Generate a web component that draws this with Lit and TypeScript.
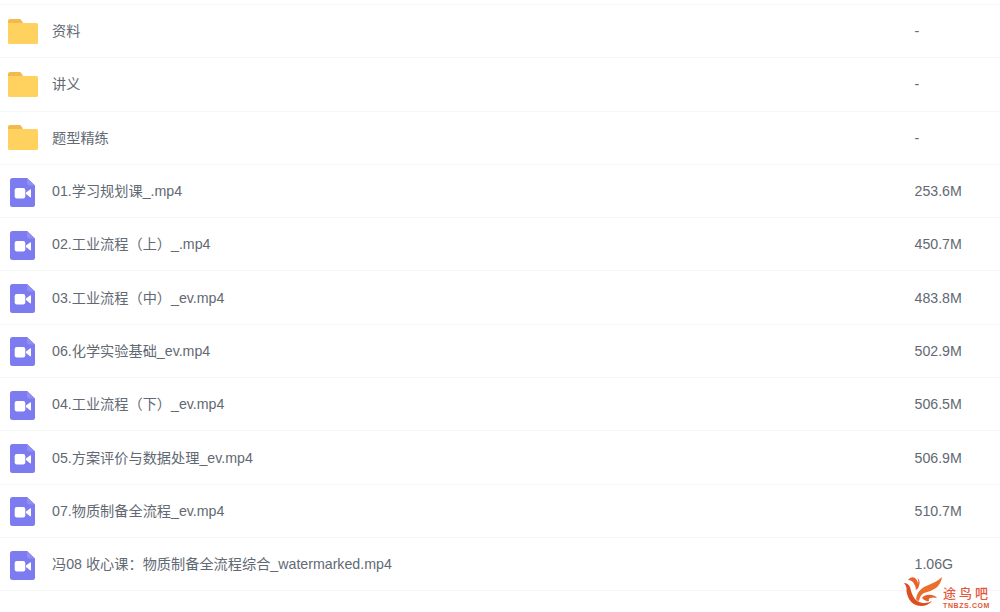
import { LitElement, html, css, svg } from "lit";
import { customElement } from "lit/decorators.js";

const rows: [string, string, string][] = [
  ["f", "资料", "-"],
  ["f", "讲义", "-"],
  ["f", "题型精练", "-"],
  ["v", "01.学习规划课_.mp4", "253.6M"],
  ["v", "02.工业流程（上）_.mp4", "450.7M"],
  ["v", "03.工业流程（中）_ev.mp4", "483.8M"],
  ["v", "06.化学实验基础_ev.mp4", "502.9M"],
  ["v", "04.工业流程（下）_ev.mp4", "506.5M"],
  ["v", "05.方案评价与数据处理_ev.mp4", "506.9M"],
  ["v", "07.物质制备全流程_ev.mp4", "510.7M"],
  ["v", "冯08 收心课：物质制备全流程综合_watermarked.mp4", "1.06G"],
];

const folder = svg`<svg class="fo" width="30" height="25" viewBox="0 0 30 25">
  <path d="M0 2Q0 0 2 0H11.5Q12.8 0 13.4 1.2L15 4H0Z" fill="#f2b94f"/>
  <path d="M0 4H28.5Q30 4 30 5.5V23.5Q30 25 28.5 25H1.5Q0 25 0 23.5Z" fill="#ffd25f"/>
</svg>`;

const video = svg`<svg class="vi" width="25" height="29" viewBox="0 0 25 29">
  <path d="M2.5 0H17L25 7.5V26.5Q25 29 22.5 29H2.5Q0 29 0 26.5V2.5Q0 0 2.5 0Z" fill="#7c7cf0"/>
  <path d="M17 0L25 7.5H19.5Q17 7.5 17 5Z" fill="#8f8ff4"/>
  <rect x="4.7" y="10" width="10.6" height="10.5" rx="2.2" fill="#fff"/>
  <path d="M16 14.6L20.4 11.2Q21 11 21 11.8V18.8Q21 19.6 20.4 19.4L16 16Z" fill="#fff"/>
</svg>`;

@customElement("app-root")
export class AppRoot extends LitElement {
  static styles = css`
    :host {
      display: block;
      position: relative;
      width: 1000px;
      height: 612px;
      overflow: hidden;
      background: #fff;
      font-family: "Liberation Sans", "Noto Sans CJK SC", sans-serif;
      color: #626973;
      font-size: 14.2px;
    }
    .list {
      display: flex;
      flex-direction: column;
      padding-top: 4px;
    }
    .row {
      display: flex;
      align-items: center;
      height: 53.3px;
      box-sizing: border-box;
      border-top: 1px solid #f5f6f8;
    }
    .row:last-child {
      border-bottom: 1px solid #f5f6f8;
    }
    .icon {
      width: 52px;
      display: flex;
    }
    .fo {
      margin-left: 8px;
    }
    .vi {
      margin-left: 10px;
      margin-top: 2px;
    }
    .name {
      flex: 1;
      padding-bottom: 2px;
    }
    .size {
      width: 85.5px;
    }
    .mark {
      position: absolute;
      left: 903px;
      top: 576px;
      width: 97px;
      height: 36px;
    }
    .logo {
      display: block;
    }
    .cn {
      position: absolute;
      left: 40px;
      top: 8.5px;
      font-size: 13px;
      line-height: 15px;
      letter-spacing: 3px;
      font-weight: 500;
      color: #e2573a;
      font-family: "Noto Sans CJK SC", sans-serif;
      white-space: nowrap;
    }
    .en {
      position: absolute;
      left: 40px;
      top: 25.5px;
      font-size: 7px;
      line-height: 8px;
      font-weight: 700;
      letter-spacing: 0.6px;
      color: #e2573a;
      font-family: "Liberation Sans", sans-serif;
      white-space: nowrap;
    }
  `;

  render() {
    return html`
      <div class="list">
        ${rows.map(
          ([t, n, s]) => html`<div class="row">
            <div class="icon">${t === "f" ? folder : video}</div>
            <div class="name">${n}</div>
            <div class="size">${s}</div>
          </div>`
        )}
        <div class="row"></div>
      </div>
      <div class="mark">
        <svg class="logo" width="40" height="32" viewBox="0 0 40 32">
          <path d="M7 2Q11 0 13 3Q15 5 15 9Q16 5 14.5 2Q17 4 16.5 8Q16 12 13 14Q12.5 9 10 6Q8 4 5 4Q6 3 7 2Z" fill="#e8602a"/>
          <path d="M1 7Q5 7 7 11Q8 16 10 20Q13 26 20 27Q25 27.5 29 25Q25 30 18 30Q10 30 6 23Q3 17 3.5 12Q3 9 1 7Z" fill="#dc4f22"/>
          <path d="M13 23Q14 15 21 11Q28 8 32 6Q36 4 39 1Q38 8 33 12Q27 16 21 17Q17 19 16 25Q14 25 13 23Z" fill="#ec6e2c"/>
          <path d="M19 22Q22 18 29 19Q33 20 34 22Q30 21 27 22Q25 23 26 25Q22 26 19 22Z" fill="#e8602a"/>
        </svg>
        <span class="cn">途鸟吧</span>
        <span class="en">TNBZS.COM</span>
      </div>
    `;
  }
}
